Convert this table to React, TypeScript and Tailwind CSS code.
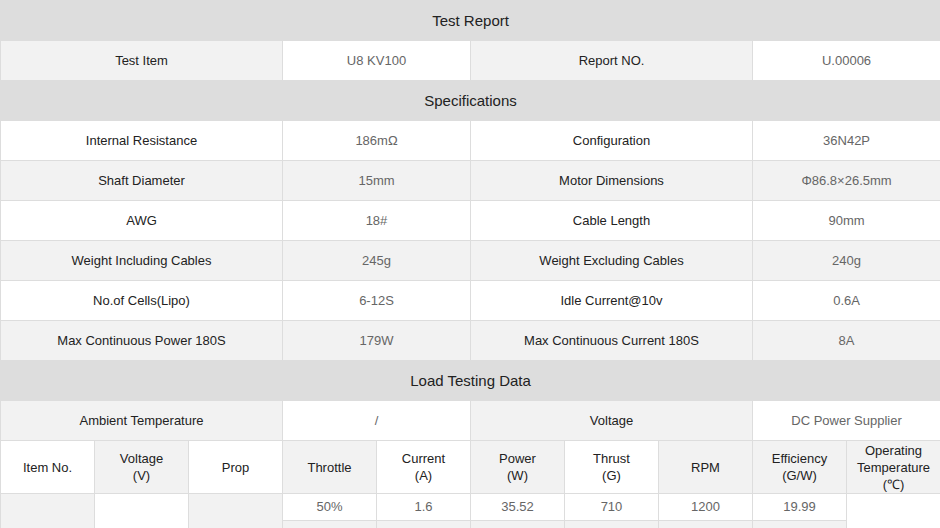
import React from "react";

type Pair = [string, string, string, string];

const SPECS: Pair[] = [
  ["Internal Resistance", "186mΩ", "Configuration", "36N42P"],
  ["Shaft Diameter", "15mm", "Motor Dimensions", "Φ86.8×26.5mm"],
  ["AWG", "18#", "Cable Length", "90mm"],
  ["Weight Including Cables", "245g", "Weight Excluding Cables", "240g"],
  ["No.of Cells(Lipo)", "6-12S", "Idle Current@10v", "0.6A"],
  ["Max Continuous Power 180S", "179W", "Max Continuous Current 180S", "8A"],
];

const DATA = [
  ["50%", "1.6", "35.52", "710", "1200", "19.99"],
  ["60%", "2.5", "52.64", "1010", "1400", "19.19"],
];

const cell = "border border-[#dddddd] text-center align-middle px-1";
const label = "text-[#222222]";
const value = "text-[#666666]";

const SectionHead = ({ title }: { title: string }) => (
  <tr className="h-[40px]">
    <td colSpan={10} className={`${cell} bg-[#dddddd] text-[15px] text-[#222222]`}>
      {title}
    </td>
  </tr>
);

const KeyRow = ({ row, gray }: { row: Pair; gray?: boolean }) => {
  const bg = gray ? "bg-[#f2f2f2]" : "bg-white";
  return (
    <tr className="h-[40px]">
      <td colSpan={3} className={`${cell} ${bg} ${label}`}>{row[0]}</td>
      <td colSpan={2} className={`${cell} ${bg} ${value}`}>{row[1]}</td>
      <td colSpan={3} className={`${cell} ${bg} ${label}`}>{row[2]}</td>
      <td colSpan={2} className={`${cell} ${bg} ${value}`}>{row[3]}</td>
    </tr>
  );
};

const headCols: { text: string[]; gray: boolean }[] = [
  { text: ["Item No."], gray: false },
  { text: ["Voltage", "(V)"], gray: true },
  { text: ["Prop"], gray: false },
  { text: ["Throttle"], gray: true },
  { text: ["Current", "(A)"], gray: false },
  { text: ["Power", "(W)"], gray: true },
  { text: ["Thrust", "(G)"], gray: false },
  { text: ["RPM"], gray: true },
  { text: ["Efficiency", "(G/W)"], gray: true },
  { text: ["Operating", "Temperature", "(℃)"], gray: true },
];

export default function App() {
  return (
    <div className="w-[940px] bg-white font-['Liberation_Sans',Arial,sans-serif] text-[13px] leading-[16px]">
      <table className="w-[940px] table-fixed border-collapse">
        <colgroup>
          {Array.from({ length: 10 }).map((_, i) => (
            <col key={i} className="w-[94px]" />
          ))}
        </colgroup>
        <tbody>
          <SectionHead title="Test Report" />
          <tr className="h-[40px]">
            <td colSpan={3} className={`${cell} bg-[#f2f2f2] ${label}`}>Test Item</td>
            <td colSpan={2} className={`${cell} bg-white ${value}`}>U8 KV100</td>
            <td colSpan={3} className={`${cell} bg-[#f2f2f2] ${label}`}>Report NO.</td>
            <td colSpan={2} className={`${cell} bg-white ${value}`}>U.00006</td>
          </tr>

          <SectionHead title="Specifications" />
          {SPECS.map((row, i) => (
            <KeyRow key={row[0]} row={row} gray={i % 2 === 1} />
          ))}

          <SectionHead title="Load Testing Data" />
          <tr className="h-[40px]">
            <td colSpan={3} className={`${cell} bg-[#f2f2f2] ${label}`}>Ambient Temperature</td>
            <td colSpan={2} className={`${cell} bg-white ${value}`}>/</td>
            <td colSpan={3} className={`${cell} bg-[#f2f2f2] ${label}`}>Voltage</td>
            <td colSpan={2} className={`${cell} bg-white ${value}`}>DC Power Supplier</td>
          </tr>
          <tr className="h-[53px]">
            {headCols.map((c) => (
              <td
                key={c.text[0]}
                className={`${cell} ${c.gray ? "bg-[#f2f2f2]" : "bg-white"} ${label} leading-[17px]`}
              >
                {c.text.map((t) => (
                  <div key={t}>{t}</div>
                ))}
              </td>
            ))}
          </tr>
          {DATA.map((r, i) => (
            <tr key={r[0]} className="h-[27px]">
              {i === 0 && (
                <>
                  <td rowSpan={DATA.length} className={`${cell} bg-[#f2f2f2]`} />
                  <td rowSpan={DATA.length} className={`${cell} bg-white`} />
                  <td rowSpan={DATA.length} className={`${cell} bg-[#f2f2f2]`} />
                </>
              )}
              {r.map((v, j) => (
                <td
                  key={j}
                  className={`${cell} ${i % 2 === 1 ? "bg-[#f2f2f2]" : "bg-white"} ${value}`}
                >
                  {v}
                </td>
              ))}
              {i === 0 && <td rowSpan={DATA.length} className={`${cell} bg-white`} />}
            </tr>
          ))}
        </tbody>
      </table>
    </div>
  );
}
